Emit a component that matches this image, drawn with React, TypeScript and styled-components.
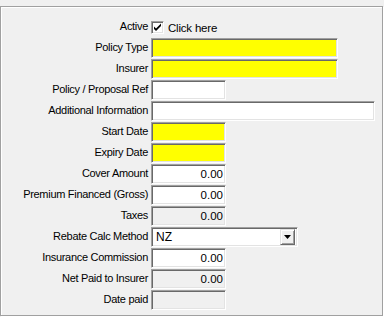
import React from 'react';
import styled, { createGlobalStyle } from 'styled-components';

const GlobalStyle = createGlobalStyle`
  html, body {
    margin: 0;
    padding: 0;
    background: #f0f0f0;
  }
  body {
    font-family: "Liberation Sans", Arial, sans-serif;
    font-size: 11px;
    color: #000;
  }
`;

const Page = styled.div`
  width: 384px;
  height: 317px;
  padding-top: 6px;
  box-sizing: border-box;
  background: #f0f0f0;
`;

const Frame = styled.div`
  width: 383px;
  height: 310px;
  box-sizing: border-box;
  border: 1px solid #a0a0a0;
  box-shadow: 1px 1px 0 #fff, inset 1px 1px 0 #fff;
  padding-top: 10px;
  display: grid;
  grid-template-columns: 147px 1fr;
  grid-auto-rows: 20px;
  column-gap: 3px;
  row-gap: 1px;
  align-items: center;
`;

const Label = styled.div`
  text-align: right;
  white-space: nowrap;
  line-height: 14px;
  margin-top: -2px;
  letter-spacing: -0.3px;
`;

const Field = styled.div<{ $width: number; $bg?: string; $align?: 'left' | 'right' }>`
  width: ${({ $width }) => $width}px;
  height: 20px;
  box-sizing: border-box;
  background: ${({ $bg }) => $bg || '#fff'};
  border-top: 1px solid #a0a0a0;
  border-left: 1px solid #a0a0a0;
  border-right: 1px solid #fff;
  border-bottom: 1px solid #fff;
  box-shadow: inset 1px 1px 0 #696969, inset -1px -1px 0 #e3e3e3;
  display: flex;
  align-items: center;
  justify-content: ${({ $align }) => ($align === 'right' ? 'flex-end' : 'flex-start')};
  padding: 0 2px 0 4px;
  font-size: 11.5px;
`;

const CheckRow = styled.div`
  display: flex;
  align-items: center;
  gap: 4px;
  margin-top: 1px;
  letter-spacing: -0.2px;
  font-size: 11.5px;
`;

const CheckBox = styled.div`
  width: 13px;
  height: 13px;
  box-sizing: border-box;
  background: #fff;
  border-top: 1px solid #a0a0a0;
  border-left: 1px solid #a0a0a0;
  border-right: 1px solid #fff;
  border-bottom: 1px solid #fff;
  box-shadow: inset 1px 1px 0 #696969, inset -1px -1px 0 #e3e3e3;
  display: flex;
  align-items: center;
  justify-content: center;
`;

const SelectText = styled.span`
  flex: 1;
  font-size: 12px;
`;

const DropButton = styled.div`
  width: 15px;
  height: 16px;
  box-sizing: border-box;
  background: #f0f0f0;
  border-top: 1px solid #e3e3e3;
  border-left: 1px solid #e3e3e3;
  border-right: 1px solid #696969;
  border-bottom: 1px solid #696969;
  box-shadow: inset 1px 1px 0 #fff, inset -1px -1px 0 #a0a0a0;
  display: flex;
  align-items: center;
  justify-content: center;
`;

const yellow = '#ffff00';
const grey = '#f0f0f0';

type Row = { label: string; width: number; bg?: string; value?: string };

const rows: Row[] = [
  { label: 'Policy Type', width: 187, bg: yellow },
  { label: 'Insurer', width: 187, bg: yellow },
  { label: 'Policy / Proposal Ref', width: 75 },
  { label: 'Additional Information', width: 224 },
  { label: 'Start Date', width: 75, bg: yellow },
  { label: 'Expiry Date', width: 75, bg: yellow },
  { label: 'Cover Amount', width: 75, value: '0.00' },
  { label: 'Premium Financed (Gross)', width: 75, value: '0.00' },
  { label: 'Taxes', width: 75, bg: grey, value: '0.00' },
];

const rowsAfter: Row[] = [
  { label: 'Insurance Commission', width: 75, value: '0.00' },
  { label: 'Net Paid to Insurer', width: 75, bg: grey, value: '0.00' },
  { label: 'Date paid', width: 75, bg: grey },
];

const renderRow = (r: Row) => (
  <React.Fragment key={r.label}>
    <Label>{r.label}</Label>
    <Field $width={r.width} $bg={r.bg} $align={r.value ? 'right' : 'left'}>
      {r.value}
    </Field>
  </React.Fragment>
);

const App = () => {
  return (
    <Page>
      <GlobalStyle />
      <Frame>
        <Label>Active</Label>
        <CheckRow>
          <CheckBox>
            <svg width="9" height="9" viewBox="0 0 9 9">
              <path d="M1 3.5 L3 5.5 L8 0.5 L8 3 L3 8 L1 6 Z" fill="#000" />
            </svg>
          </CheckBox>
          <span>Click here</span>
        </CheckRow>
        {rows.map(renderRow)}
        <Label>Rebate Calc Method</Label>
        <Field $width={147}>
          <SelectText>NZ</SelectText>
          <DropButton>
            <svg width="7" height="4" viewBox="0 0 7 4">
              <path d="M0 0 H7 L3.5 4 Z" fill="#000" />
            </svg>
          </DropButton>
        </Field>
        {rowsAfter.map(renderRow)}
      </Frame>
    </Page>
  );
};

export default App;
